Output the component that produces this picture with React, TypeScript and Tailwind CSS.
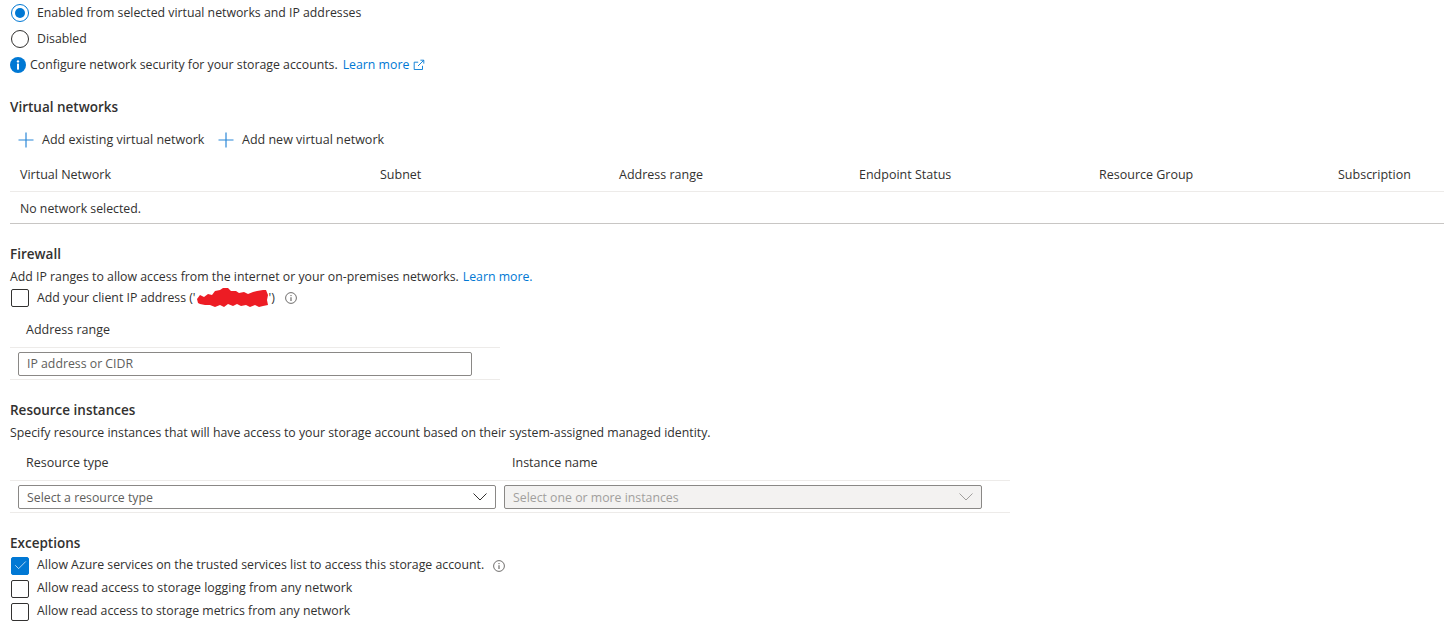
import { Check } from 'lucide-react';

const font = { fontFamily: '"Open Sans", "Noto Sans", sans-serif' };

function Radio({ checked, label }: { checked?: boolean; label: string }) {
  return (
    <div className="flex h-[26px] items-center">
      <span className={`ml-px flex h-[18px] w-[18px] items-center justify-center rounded-full border ${checked ? 'border-[#0078d4]' : 'border-[#323130]'}`}>
        {checked && <span className="h-2.5 w-2.5 rounded-full bg-[#0078d4]" />}
      </span>
      <span className="ml-2 text-[#323130]">{label}</span>
    </div>
  );
}

function Box({ checked }: { checked?: boolean }) {
  return (
    <span className={`ml-px flex h-[18px] w-[18px] shrink-0 items-center justify-center rounded-[2px] border ${checked ? 'border-[#0078d4] bg-[#0078d4]' : 'border-[#323130] bg-white'}`}>
      {checked && <Check size={15} strokeWidth={1.1} className="text-white" />}
    </span>
  );
}

function InfoOutline() {
  return (
    <svg width="12" height="12" viewBox="0 0 12 12" fill="none" className="shrink-0 text-[#605e5c]">
      <circle cx="6" cy="6" r="5.4" stroke="currentColor" strokeWidth="0.9" />
      <path d="M6 5.2V9" stroke="currentColor" strokeWidth="1.1" />
      <circle cx="6" cy="3.6" r="0.7" fill="currentColor" />
    </svg>
  );
}

function PlusIcon() {
  return (
    <svg width="16" height="16" viewBox="0 0 16 16" fill="none" stroke="#2b88d8" strokeWidth="1.2" className="shrink-0">
      <path d="M8 0.5v15M0.5 8h15" />
    </svg>
  );
}

function Chevron({ disabled }: { disabled?: boolean }) {
  return (
    <svg width="14" height="8" viewBox="0 0 14 8" fill="none" stroke={disabled ? '#a19f9d' : '#323130'} strokeWidth="1" className="shrink-0">
      <path d="M0.5 0.5L7 7L13.5 0.5" />
    </svg>
  );
}

function Heading({ children }: { children: string }) {
  return <div className="flex h-6 items-center pt-px text-[13.5px] font-semibold text-[#323130]">{children}</div>;
}

function Select({ placeholder, disabled }: { placeholder: string; disabled?: boolean }) {
  return (
    <div className={`flex h-6 w-full items-center justify-between rounded-[2px] border border-[#8a8886] pl-2 pr-2 ${disabled ? 'bg-[#f3f2f1] text-[#a19f9d]' : 'bg-white text-[#605e5c]'}`}>
      <span className="pt-[3px]">{placeholder}</span>
      <Chevron disabled={disabled} />
    </div>
  );
}

const columns = ['Virtual Network', 'Subnet', 'Address range', 'Endpoint Status', 'Resource Group', 'Subscription'];

export default function App() {
  return (
    <div style={font} className="h-[634px] overflow-hidden bg-white pl-2.5 text-[12.3px] leading-none text-[#323130]">
      <Radio checked label="Enabled from selected virtual networks and IP addresses" />
      <Radio label="Disabled" />

      <div className="flex h-[26px] items-center">
        <svg width="16" height="16" viewBox="0 0 16 16" className="shrink-0">
          <circle cx="8" cy="8" r="8" fill="#0078d4" />
          <rect x="7" y="6.6" width="2" height="6" fill="#fff" />
          <circle cx="8" cy="4.4" r="1.2" fill="#fff" />
        </svg>
        <span className="ml-1">Configure network security for your storage accounts.</span>
        <a className="ml-[5px] text-[#0078d4]">Learn more</a>
        <svg width="12" height="12" viewBox="0 0 12 12" fill="none" stroke="#0078d4" strokeWidth="0.9" className="ml-1">
          <path d="M9.5 6.8v3.7H1.2V3.2h4" />
          <path d="M5 7l5.6-5.6M7.4 1.2h3.4v3.4" />
        </svg>
      </div>

      <div className="mt-[17px]">
        <Heading>Virtual networks</Heading>
      </div>

      <div className="mt-[9px] flex h-6 items-center pl-2 text-[12.5px]">
        <PlusIcon />
        <span className="ml-2 w-[161px] whitespace-nowrap">Add existing virtual network</span>
        <span className="ml-[15px]">
          <PlusIcon />
        </span>
        <span className="ml-2">Add new virtual network</span>
      </div>

      <div className="mt-[5px] border-b border-[#c8c6c4]">
        <div className="grid h-[35px] grid-cols-[360px_239px_240px_240px_239px_1fr] items-center border-b border-[#edebe9] pl-2.5 pt-[2px] text-[12.5px] font-medium">
          {columns.map((c) => (
            <span key={c}>{c}</span>
          ))}
        </div>
        <div className="flex h-[31px] items-center pl-2.5 pt-[3px]">No network selected.</div>
      </div>

      <div className="mt-[18px]">
        <Heading>Firewall</Heading>
      </div>
      <div className="flex h-[22px] items-center">
        <span>Add IP ranges to allow access from the internet or your on-premises networks.</span>
        <a className="ml-1 text-[#0078d4]">Learn more.</a>
      </div>
      <div className="flex h-5 items-center">
        <Box />
        <span className="ml-2">Add your client IP address ('</span>
        <svg width="78" height="22" viewBox="0 0 78 22" className="-ml-px -mr-1 shrink-0">
          <path d="M2 12 L5 8 L9 10 L13 7 L17 8 L20 4 L25 3 L28 1 L33 1 L36 4 L41 4 L44 6 L49 5 L53 7 L58 5 L62 4 L68 3 L71 3 L73 8 L72 13 L73 18 L68 19 L64 20 L60 18 L55 20 L51 18 L46 19 L42 17 L38 19 L33 17 L29 20 L25 18 L20 20 L15 18 L10 18 L5 17 L3 16 Z" fill="#ed1c24" />
        </svg>
        <span>')</span>
        <span className="ml-[10px]">
          <InfoOutline />
        </span>
      </div>

      <div className="w-[490px]">
        <div className="mt-1 flex h-[36px] items-center border-b border-[#edebe9] pl-4 pt-px text-[12.5px] font-medium">Address range</div>
        <div className="flex h-[32px] items-center border-b border-[#edebe9] pl-2">
          <div className="flex h-6 w-[454px] items-center rounded-[2px] border border-[#8a8886] pl-2 pt-[2px] text-[#605e5c]">IP address or CIDR</div>
        </div>
      </div>

      <div className="mt-[18px]">
        <Heading>Resource instances</Heading>
      </div>
      <div className="flex h-[22px] items-center">
        Specify resource instances that will have access to your storage account based on their system-assigned managed identity.
      </div>

      <div className="w-[1000px]">
        <div className="grid h-[37px] grid-cols-[486px_1fr] items-center border-b border-[#edebe9] pl-4 pt-[2px] text-[12.5px] font-medium">
          <span>Resource type</span>
          <span>Instance name</span>
        </div>
        <div className="flex h-[32px] items-center gap-2 border-b border-[#edebe9] pl-2">
          <div className="w-[478px]">
            <Select placeholder="Select a resource type" />
          </div>
          <div className="w-[478px]">
            <Select disabled placeholder="Select one or more instances" />
          </div>
        </div>
      </div>

      <div className="mt-[18px]">
        <Heading>Exceptions</Heading>
      </div>
      <div className="-mt-px flex h-[23px] items-center">
        <Box checked />
        <span className="ml-2">Allow Azure services on the trusted services list to access this storage account.</span>
        <span className="ml-[9px]">
          <InfoOutline />
        </span>
      </div>
      <div className="flex h-[23px] items-center">
        <Box />
        <span className="ml-2 text-[12.45px]">Allow read access to storage logging from any network</span>
      </div>
      <div className="flex h-[23px] items-center">
        <Box />
        <span className="ml-2">Allow read access to storage metrics from any network</span>
      </div>
    </div>
  );
}
